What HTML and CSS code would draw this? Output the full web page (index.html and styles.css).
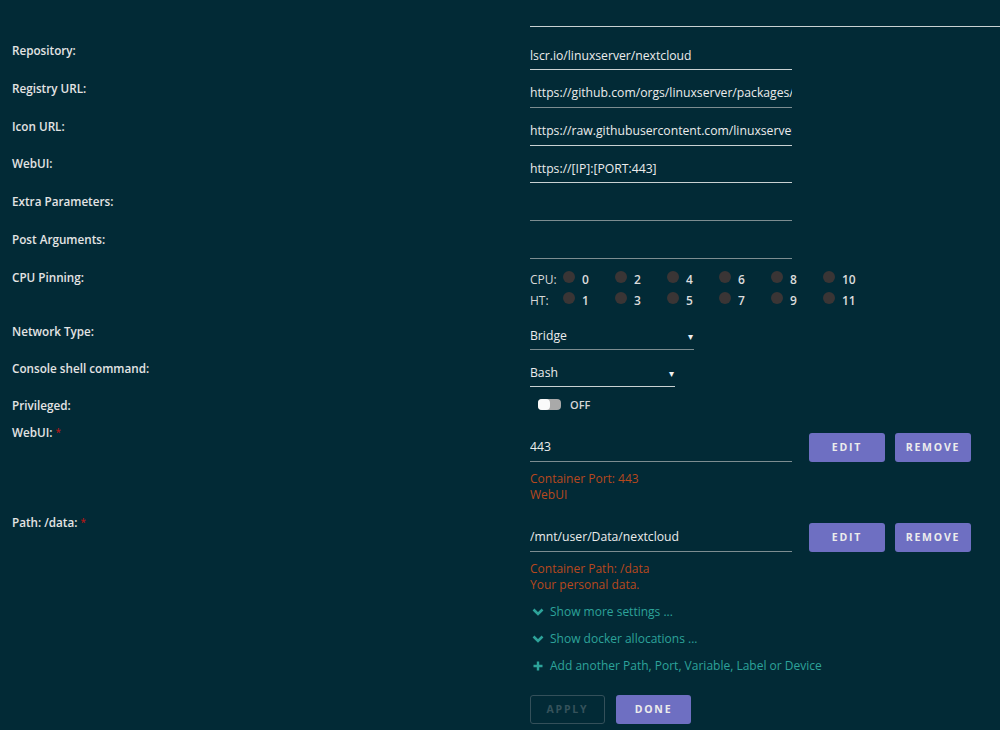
FILE: index.html
```html
<html>
<head>
    <link rel="stylesheet" href="styles.css">
</head>
<body>
<div class="form">

    <div class="topline"></div>

    <div class="row">
        <div class="label">Repository:</div>
        <div class="field"><input class="text bright" type="text" value="lscr.io/linuxserver/nextcloud"></div>
    </div>
    <div class="row">
        <div class="label">Registry URL:</div>
        <div class="field"><input class="text" type="text" value="https://github.com/orgs/linuxserver/packages/container/package/nextcloud"></div>
    </div>
    <div class="row">
        <div class="label">Icon URL:</div>
        <div class="field"><input class="text bright" type="text" value="https://raw.githubusercontent.com/linuxserver/docker-templates/master/linuxserver.io/img/nextcloud-logo.png"></div>
    </div>
    <div class="row">
        <div class="label">WebUI:</div>
        <div class="field"><input class="text bright" type="text" value="https://[IP]:[PORT:443]"></div>
    </div>
    <div class="row">
        <div class="label">Extra Parameters:</div>
        <div class="field"><input class="text" type="text" value=""></div>
    </div>
    <div class="row">
        <div class="label">Post Arguments:</div>
        <div class="field"><input class="text" type="text" value=""></div>
    </div>

    <div class="row cpu-row">
        <div class="label">CPU Pinning:</div>
        <div class="field">
            <div class="cpu-line">
                <span class="cpu-name">CPU:</span>
                <span class="core"><i class="dot"></i>0</span>
                <span class="core"><i class="dot"></i>2</span>
                <span class="core"><i class="dot"></i>4</span>
                <span class="core"><i class="dot"></i>6</span>
                <span class="core"><i class="dot"></i>8</span>
                <span class="core"><i class="dot"></i>10</span>
            </div>
            <div class="cpu-line">
                <span class="cpu-name">HT:</span>
                <span class="core"><i class="dot"></i>1</span>
                <span class="core"><i class="dot"></i>3</span>
                <span class="core"><i class="dot"></i>5</span>
                <span class="core"><i class="dot"></i>7</span>
                <span class="core"><i class="dot"></i>9</span>
                <span class="core"><i class="dot"></i>11</span>
            </div>
        </div>
    </div>

    <div class="row select-row">
        <div class="label">Network Type:</div>
        <div class="field">
            <div class="select network">Bridge<span class="caret">&#9662;</span></div>
        </div>
    </div>
    <div class="row select-row">
        <div class="label">Console shell command:</div>
        <div class="field">
            <div class="select shell bright">Bash<span class="caret">&#9662;</span></div>
        </div>
    </div>

    <div class="row switch-row">
        <div class="label">Privileged:</div>
        <div class="field">
            <span class="switch"><span class="knob"></span></span>
            <span class="switch-text">OFF</span>
        </div>
    </div>

    <div class="row config-row">
        <div class="label">WebUI: <span class="req">*</span></div>
        <div class="field">
            <div class="config-line">
                <input class="text" type="text" value="443">
                <button class="btn">Edit</button>
                <button class="btn">Remove</button>
            </div>
            <div class="desc">Container Port: 443<br>WebUI</div>
        </div>
    </div>

    <div class="row config-row">
        <div class="label">Path: /data: <span class="req">*</span></div>
        <div class="field">
            <div class="config-line">
                <input class="text" type="text" value="/mnt/user/Data/nextcloud">
                <button class="btn">Edit</button>
                <button class="btn">Remove</button>
            </div>
            <div class="desc">Container Path: /data<br>Your personal data.</div>
        </div>
    </div>

    <div class="row links-row">
        <div class="label"></div>
        <div class="field">
            <a class="more" href="#">
                <svg width="12" height="8" viewBox="0 0 12 8"><path d="M1.5 1.5 L6 6 L10.5 1.5" fill="none" stroke="currentColor" stroke-width="2.6"/></svg>
                Show more settings ...
            </a>
            <a class="more" href="#">
                <svg width="12" height="8" viewBox="0 0 12 8"><path d="M1.5 1.5 L6 6 L10.5 1.5" fill="none" stroke="currentColor" stroke-width="2.6"/></svg>
                Show docker allocations ...
            </a>
            <a class="more" href="#">
                <svg width="12" height="10" viewBox="0 0 12 10"><path d="M6 0.5 V9.5 M1.5 5 H10.5" fill="none" stroke="currentColor" stroke-width="2.4"/></svg>
                Add another Path, Port, Variable, Label or Device
            </a>
        </div>
    </div>

    <div class="row actions-row">
        <div class="label"></div>
        <div class="field">
            <button class="btn ghost" disabled>Apply</button>
            <button class="btn">Done</button>
        </div>
    </div>

</div>
</body>
</html>
```

FILE: styles.css
```css
body {
    margin: 0;
    background-color: #022a36;
    font-family: 'Open Sans', 'Noto Sans', sans-serif;
    color: #e2e2e2;
    overflow: hidden;
}
.form {
    width: 1000px;
}
.topline {
    margin-left: 530px;
    height: 26px;
    border-bottom: 1px solid #c9d1d2;
    margin-bottom: 14px;
}
.row {
    display: grid;
    grid-template-columns: 530px 1fr;
    height: 37.8px;
}
.label {
    padding-left: 12px;
    padding-top: 1px;
    font-size: 11.7px;
    line-height: 16px;
    font-weight: 600;
    color: #e4e4e4;
}
.req {
    color: #b01818;
    font-size: 10px;
    vertical-align: top;
}
input.text {
    display: block;
    width: 262px;
    height: 29px;
    box-sizing: border-box;
    padding: 0;
    margin: 0;
    background: transparent;
    border: none;
    border-bottom: 1px solid #7d8d91; /* dimmed underline */
    color: #ececec;
    font-family: 'Open Sans', 'Noto Sans', sans-serif;
    font-size: 12.2px;
    outline: none;
}
.bright {
    border-bottom-color: #c9d1d2 !important;
}

/* cpu pinning */
.cpu-row {
    height: auto;
}
.cpu-row .field {
    padding-top: 1px;
}
.cpu-line {
    display: flex;
    align-items: center;
    height: 21px;
    font-size: 12px;
    font-weight: 600;
}
.cpu-name {
    width: 33px;
    color: #d8d8d8;
    font-weight: 400;
}
.core {
    display: flex;
    align-items: center;
    width: 52px;
    color: #dcdcdc;
}
.dot {
    width: 12px;
    height: 12px;
    border-radius: 50%;
    background-color: #3a3535;
    margin-right: 7px;
    position: relative;
    top: -2px;
}

/* selects */
.select-row {
    height: 37px;
}
.cpu-row + .select-row {
    margin-top: 11px;
}
.select {
    position: relative;
    height: 28px;
    box-sizing: border-box;
    border-bottom: 1px solid #7d8d91;
    font-size: 12.2px;
    line-height: 28px;
    color: #ececec;
}
.select.network {
    width: 164px;
}
.select.shell {
    width: 145px;
}
.caret {
    position: absolute;
    right: 1px;
    top: 0;
    font-size: 10px;
    color: #f0f0f0;
}

/* switch */
.switch-row {
    height: 27px;
}
.switch-row .field {
    display: flex;
    align-items: center;
    height: 18px;
    padding-left: 8px;
}
.switch {
    display: inline-block;
    width: 23px;
    height: 11px;
    border-radius: 4px;
    background-color: #a9a9a9;
    position: relative;
    margin-right: 9px;
}
.knob {
    position: absolute;
    left: 0;
    top: 0;
    width: 12px;
    height: 11px;
    border-radius: 4px;
    background-color: #fafafa;
}
.switch-text {
    font-size: 11px;
    font-weight: 600;
    color: #d6d6d6;
}

/* port / path rows */
.config-row {
    height: auto;
    margin-bottom: 10px;
}
.config-row .field {
    padding-top: 10px;
}
.config-line {
    display: flex;
    gap: 10px;
}
.config-line input.text {
    margin-right: 7px;
}
.btn {
    width: 76px;
    height: 29px;
    border: none;
    border-radius: 3px;
    background-color: #6e6fc2;
    color: #ececec;
    font-family: 'Open Sans', 'Noto Sans', sans-serif;
    font-size: 10.5px;
    font-weight: 700;
    letter-spacing: 1.8px;
    text-transform: uppercase;
    padding: 0;
}
.desc {
    margin-top: 9px;
    font-size: 12px;
    line-height: 16px;
    color: #b8481d;
}

/* links */
.links-row {
    height: auto;
}
.links-row .field {
    padding-top: 1px;
}
.more {
    display: flex;
    align-items: center;
    height: 16px;
    margin-bottom: 11px;
    font-size: 12px;
    color: #2da39a;
    text-decoration: none;
}
.more svg {
    margin-left: 2px;
    margin-right: 6px;
}

/* bottom buttons */
.actions-row {
    height: auto;
    margin-top: 10px;
}
.actions-row .field {
    display: flex;
    gap: 11px;
}
.actions-row .btn {
    width: 75px;
    height: 29px;
}
.btn.ghost {
    background: transparent;
    border: 1px solid #34505a;
    color: #35525b;
}
```
